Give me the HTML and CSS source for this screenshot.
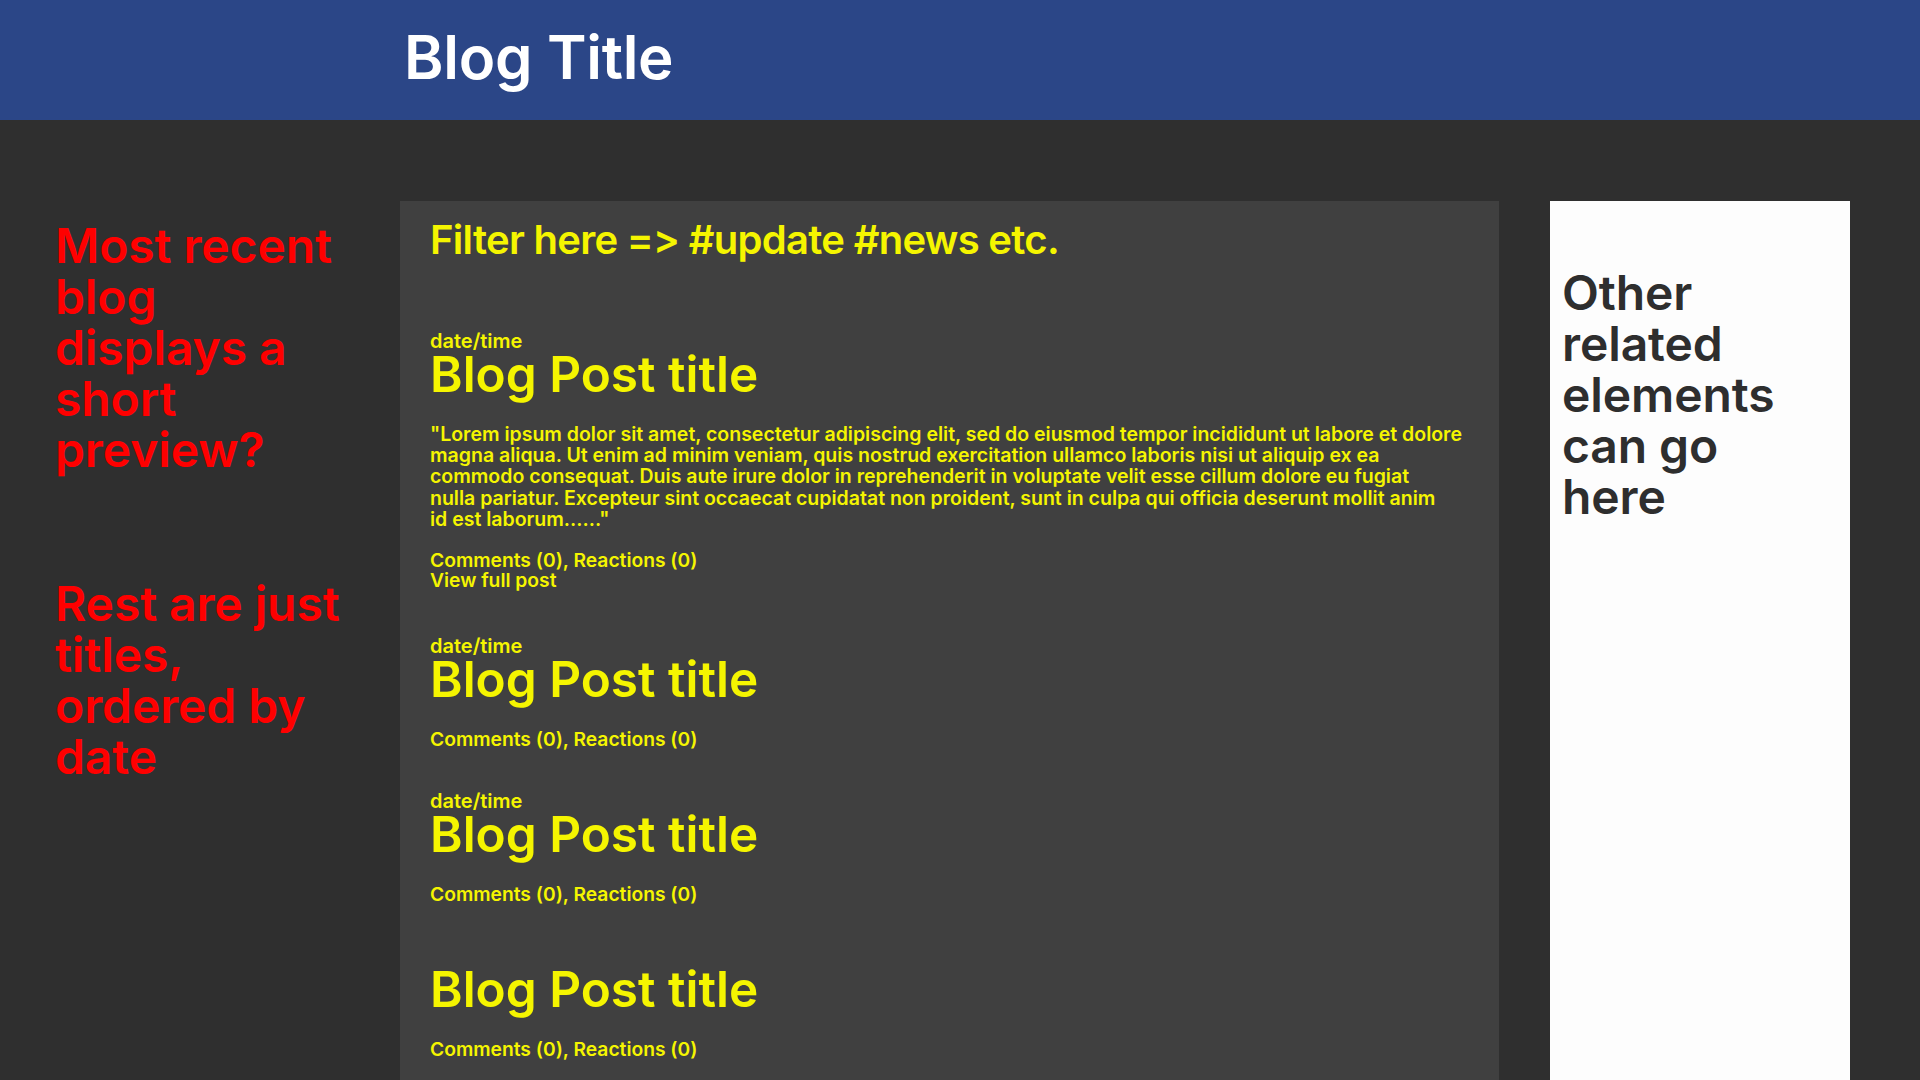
FILE: index.html
```html
<!DOCTYPE html>
<html lang="en">
<head>
<meta charset="utf-8">
<title>Blog</title>
<link rel="stylesheet" href="styles.css">
</head>
<body>
<header class="topbar">
  <h1 class="site-title">Blog Title</h1>
</header>
<div class="layout">
  <aside class="notes">
    <p class="note">Most recent blog displays a short preview?</p>
    <p class="note note-second">Rest are just titles, ordered by date</p>
  </aside>
  <main class="feed">
    <p class="filter">Filter here =&gt; #update #news etc.</p>
    <article class="post post-first">
      <p class="post-date">date/time</p>
      <h2 class="post-title">Blog Post title</h2>
      <p class="excerpt">"Lorem ipsum dolor sit amet, consectetur adipiscing elit, sed do eiusmod tempor incididunt ut labore et dolore<br>magna aliqua. Ut enim ad minim veniam, quis nostrud exercitation ullamco laboris nisi ut aliquip ex ea<br>commodo consequat. Duis aute irure dolor in reprehenderit in voluptate velit esse cillum dolore eu fugiat<br>nulla pariatur. Excepteur sint occaecat cupidatat non proident, sunt in culpa qui officia deserunt mollit anim<br>id est laborum......"</p>
      <p class="meta">Comments (0), Reactions (0)</p>
      <p class="meta">View full post</p>
    </article>
    <article class="post">
      <p class="post-date">date/time</p>
      <h2 class="post-title">Blog Post title</h2>
      <p class="meta">Comments (0), Reactions (0)</p>
    </article>
    <article class="post">
      <p class="post-date">date/time</p>
      <h2 class="post-title">Blog Post title</h2>
      <p class="meta">Comments (0), Reactions (0)</p>
    </article>
    <article class="post">
      <p class="post-date">&nbsp;</p>
      <h2 class="post-title">Blog Post title</h2>
      <p class="meta">Comments (0), Reactions (0)</p>
    </article>
  </main>
  <aside class="related">
    <p class="related-text">Other related elements can go here</p>
  </aside>
</div>
</body>
</html>
```
FILE: styles.css
```css
* { box-sizing: border-box; }
html, body { margin: 0; padding: 0; }
body {
  background: #2f2f2f;
  font-family: Inter, "Open Sans", sans-serif;
  font-weight: 600;
  font-variant-ligatures: none;
  font-feature-settings: "calt" 0, "liga" 0;
}
p, h1, h2 { margin: 0; font-weight: 600; }

.topbar {
  height: 120px;
  background: #2b4687;
  padding: 20px 0 0 404px;
}
.site-title {
  color: #ffffff;
  font-size: 60px;
  line-height: 75px;
  letter-spacing: -0.3px;
}

.layout {
  display: flex;
  align-items: stretch;
}

.notes {
  width: 400px;
  flex: none;
  padding: 100px 0 0 55px;
}
.note {
  color: #ff0000;
  font-size: 48px;
  line-height: 51px;
  letter-spacing: -0.1px;
  width: 295px;
}
.note-second { margin-top: 103px; }

.feed {
  width: 1099px;
  flex: none;
  margin-top: 81px;
  background: #404040;
  padding: 15px 20px 40px 30px;
  color: #f5f500;
}
.filter {
  font-size: 40px;
  line-height: 48px;
  letter-spacing: -0.7px;
}
.post { margin-top: 42px; }
.post-first { margin-top: 67px; padding-bottom: 4px; }
.post-date {
  font-size: 20px;
  line-height: 20px;
}
.post-title {
  font-size: 49.5px;
  line-height: 44px;
  margin-top: 1px;
  margin-bottom: 28px;
}
.excerpt {
  font-size: 19.5px;
  line-height: 21.2px;
  margin-bottom: 20px;
}
.meta {
  font-size: 19.25px;
  line-height: 20px;
}

.related {
  width: 300px;
  flex: none;
  margin: 81px 0 0 51px;
  background: #fdfdfd;
  padding: 66px 12px 0 12px;
}
.related-text {
  color: #2e2e2e;
  font-size: 48px;
  line-height: 51px;
  letter-spacing: -0.1px;
  width: 240px;
}
```
